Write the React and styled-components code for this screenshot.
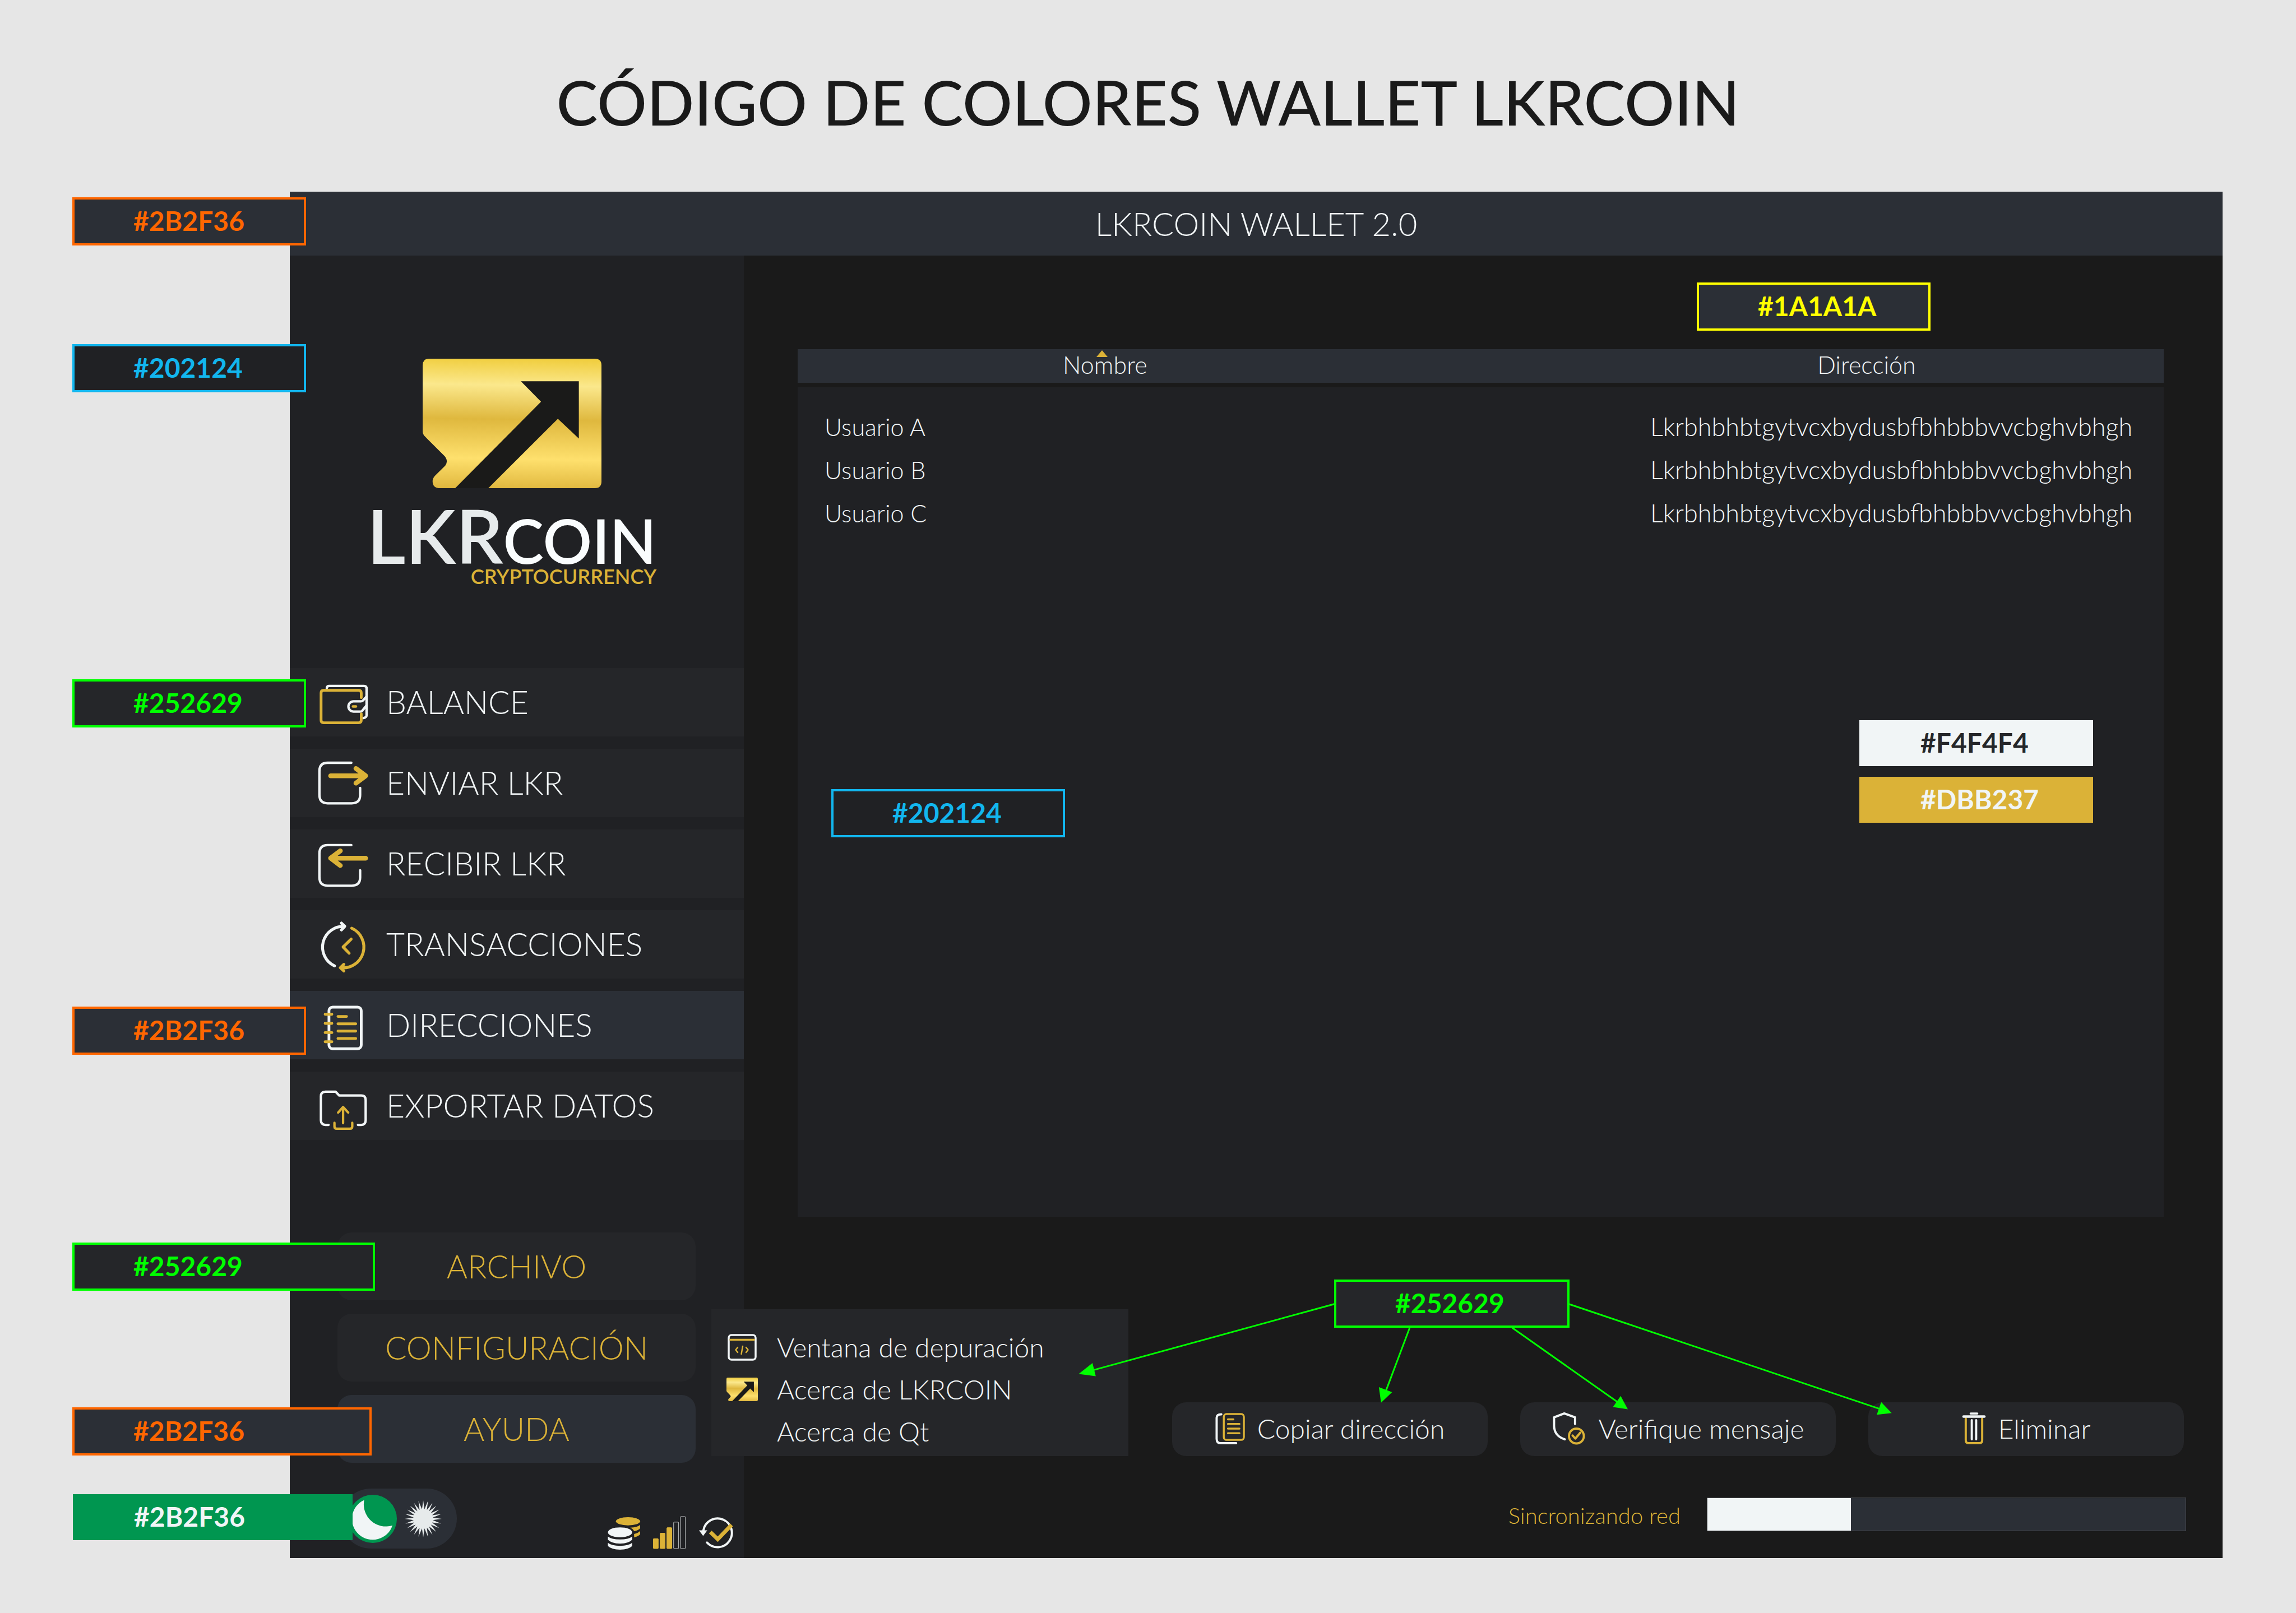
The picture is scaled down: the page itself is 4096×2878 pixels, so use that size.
import React, { useState } from "react";
import styled, { createGlobalStyle, css } from "styled-components";

const c = {
  page: "#e6e6e6",
  bar: "#2b2f36",
  side: "#202124",
  item: "#252629",
  main: "#1a1a1a",
  white: "#f1f5f6",
  gold: "#dbb237",
  green: "#00ff00",
  orange: "#ff6600",
  cyan: "#12b6ee",
  yellow: "#ffff00",
  emerald: "#009650",
};

const GlobalStyle = createGlobalStyle`
  * { box-sizing: border-box; }
  body {
    margin: 0;
    background: ${c.page};
    color: ${c.white};
    font-family: Lato, "Liberation Sans", sans-serif;
    font-weight: 300;
  }
  button { font: inherit; color: inherit; border: 0; cursor: pointer; }
`;

const Page = styled.div`
  display: flex;
  flex-direction: column;
  min-height: 100vh;
  padding-bottom: 98px;
`;

const PageTitle = styled.h1`
  margin: 0;
  padding: 117px 0 97px;
  color: #1a1a1a;
  font-size: 111px;
  font-weight: 500;
  line-height: 128px;
  text-align: center;
`;

const WalletWindow = styled.section`
  flex: 1;
  display: flex;
  flex-direction: column;
  margin: 0 131px 0 517px;
`;

const TitleBar = styled.header`
  position: relative;
  display: flex;
  align-items: center;
  justify-content: center;
  height: 114px;
  padding-bottom: 2px;
  background: ${c.bar};
  font-size: 58px;
`;

const Columns = styled.div`
  flex: 1;
  display: flex;
`;

const Sidebar = styled.aside`
  display: flex;
  flex-direction: column;
  width: 810px;
  background: ${c.side};
`;

const Brand = styled.div`
  position: relative;
  display: flex;
  flex-direction: column;
  align-items: center;
  height: 736px;
  padding: 184px 18px 0 0;
`;

const Wordmark = styled.div`
  display: flex;
  flex-direction: column;
  align-items: flex-end;
  margin-top: 34px;
`;

const WordmarkName = styled.div`
  color: #e7ebec;
  font-size: 133px;
  font-weight: 600;
  line-height: 100px;
`;

const WordmarkSmall = styled.span`
  color: #fafdfe;
  font-size: 109px;
`;

const WordmarkTag = styled.div`
  color: ${c.gold};
  font-size: 36px;
  font-weight: 600;
  line-height: 28px;
`;

const Nav = styled.nav`
  display: flex;
  flex-direction: column;
  gap: 22px;
`;

const Anchor = styled.div`
  position: relative;
`;

const NavButton = styled.button`
  display: flex;
  align-items: center;
  gap: 20px;
  width: 100%;
  height: 122px;
  padding: 0 0 0 44px;
  background: ${(p) => (p.$active ? c.bar : c.item)};
  font-size: 57px;
`;

const NavLabel = styled.span`
  padding-bottom: 2px;
`;

const MenuList = styled.div`
  display: flex;
  flex-direction: column;
  gap: 24px;
  margin: auto 86px 46px 85px;
`;

const MenuButton = styled.button`
  width: 100%;
  height: 121px;
  padding: 0 0 2px;
  border-radius: 25px;
  background: ${(p) => (p.$active ? c.bar : c.item)};
  color: ${c.gold};
  font-size: 57px;
`;

const Popup = styled.div`
  position: absolute;
  z-index: 2;
  left: 667px;
  top: -153px;
  width: 744px;
  padding: 30px 0 7px;
  background: ${c.item};
`;

const PopupItem = styled.button`
  display: grid;
  grid-template-columns: 56px 1fr;
  column-gap: 34px;
  align-items: center;
  justify-items: center;
  width: 100%;
  height: 75px;
  padding: 0 0 0 27px;
  background: none;
  font-size: 48px;
  text-align: left;
`;

const PopupLabel = styled.span`
  grid-column: 2;
  justify-self: start;
`;

const StatusRow = styled.div`
  display: flex;
  align-items: flex-end;
  justify-content: space-between;
  padding: 0 17px 17px 91px;
`;

const StatusIcons = styled.div`
  display: flex;
  gap: 20px;
  margin-bottom: -3px;
`;

const ThemeSwitch = styled.button`
  display: flex;
  align-items: center;
  gap: 14px;
  width: 207px;
  height: 107px;
  padding: 0 0 0 14px;
  border-radius: 54px;
  background: ${c.bar};
`;

const Main = styled.main`
  position: relative;
  flex: 1;
  display: flex;
  flex-direction: column;
  background: ${c.main};
`;

const Table = styled.table`
  flex: 1;
  display: flex;
  flex-direction: column;
  gap: 8px;
  margin: 167px 105px 0 96px;
  font-size: 43px;
`;

const Head = styled.thead`
  background: ${c.bar};
`;

const Body = styled.tbody`
  flex: 1;
  padding-top: 32px;
  background: ${c.side};
`;

const Row = styled.tr`
  display: grid;
  grid-template-columns: 45% 43.5%;
  justify-content: space-between;
`;

const HeadCell = styled.th`
  position: relative;
  padding: 0 0 4px;
  font-weight: 300;
  line-height: 56px;
  text-align: center;
`;

const SortMark = styled.svg`
  position: absolute;
  top: 2px;
  left: calc(50% - 15px);
`;

const Cell = styled.td`
  padding: 0 0 0 ${(p) => (p.$address ? 144 : 48)}px;
  font-size: ${(p) => (p.$address ? 45 : 43)}px;
  line-height: 77px;
`;

const Actions = styled.div`
  display: flex;
  justify-content: flex-end;
  gap: 58px;
  margin: 331px 69px 0 0;
`;

const ActionButton = styled.button`
  display: flex;
  align-items: center;
  justify-content: center;
  gap: 22px;
  width: 563px;
  height: 96px;
  padding: 0 0 4px;
  border-radius: 25px;
  background: ${c.item};
  font-size: 48px;
`;

const SyncRow = styled.div`
  display: flex;
  align-items: center;
  justify-content: flex-end;
  gap: 47px;
  margin: 74px 65px 48px 0;
`;

const SyncLabel = styled.label`
  padding-top: 4px;
  color: ${c.gold};
  font-size: 40px;
`;

const SyncBar = styled.progress`
  appearance: none;
  width: 855px;
  height: 60px;
  border: 1px solid #4b4d51;
  background: ${c.bar};
  &::-webkit-progress-bar { background: ${c.bar}; }
  &::-webkit-progress-value { background: ${c.white}; }
`;

const solid = css`
  padding-left: 107px;
  border-width: 2px;
`;

const tones = {
  orange: css`background: ${c.bar}; border-color: ${c.orange}; color: ${c.orange};`,
  cyan: css`background: ${c.side}; border-color: ${c.cyan}; color: ${c.cyan};`,
  green: css`background: ${c.item}; border-color: ${c.green}; color: ${c.green};`,
  yellow: css`background: ${c.bar}; border-color: ${c.yellow}; color: ${c.yellow};`,
  emerald: css`${solid} background: ${c.emerald}; border-color: ${c.emerald}; color: ${c.white};`,
  light: css`${solid} background: ${c.white}; border-color: ${c.white}; color: ${c.item};`,
  gold: css`${solid} background: ${c.gold}; border-color: ${c.gold}; color: ${c.white};`,
};

/* Colour tag pinned over the part of the window that it names. */
const Tag = styled.span`
  position: absolute;
  z-index: 3;
  top: ${(p) => p.$top};
  left: ${(p) => p.$left};
  right: ${(p) => p.$right};
  bottom: ${(p) => p.$bottom};
  width: ${(p) => p.$width || 417}px;
  padding: 0 0 2px 105px;
  border: 4px solid;
  font-size: 48px;
  font-weight: 700;
  line-height: 76px;
  ${(p) => tones[p.$tone]}
`;

const Arrows = styled.svg`
  position: absolute;
  z-index: 3;
  right: 572px;
  bottom: 242px;
  pointer-events: none;
`;

const stroke = { fill: "none", strokeLinecap: "round", strokeLinejoin: "round" };

function NavIcon({ top, children }) {
  return (
    <svg width="108" height="122" viewBox={`0 ${top} 330 372`} aria-hidden="true" {...stroke}>
      {children}
    </svg>
  );
}

const WalletIcon = () => (
  <NavIcon top={-69}>
    <g stroke={c.white} strokeWidth="13">
      <path d="M67 40Q68 28 80 28H270Q284 28 284 42V188Q284 199 268 203" />
      <path d="M284 85L265 107Q261 112 253 112H213a28 28 0 0 0 0 56H250Q256 168 260 164L284 134" />
    </g>
    <path d="M255 92V66Q255 52 241 52H50Q36 52 36 66V215Q36 229 50 229H241Q255 229 255 215V180" stroke={c.gold} strokeWidth="15" />
    <path d="M210 140H226" stroke={c.gold} strokeWidth="14" />
  </NavIcon>
);

const SendIcon = () => (
  <NavIcon top={371}>
    <path d="M201 447H72Q27 447 27 492V623Q27 668 72 668H203Q249 668 249 623V584" stroke={c.white} strokeWidth="13" />
    <path d="M88 518H278M226 478L279 518L226 558" stroke={c.gold} strokeWidth="26" />
  </NavIcon>
);

const ReceiveIcon = () => (
  <NavIcon top={810}>
    <path d="M201 895H72Q27 895 27 940V1071Q27 1116 72 1116H203Q249 1116 249 1071V1032" stroke={c.white} strokeWidth="13" />
    <path d="M279 966H90M141 926L88 966L141 1006" stroke={c.gold} strokeWidth="26" />
  </NavIcon>
);

const HistoryIcon = () => (
  <NavIcon top={-27}>
    <path d="M109 276A113 113 0 0 1 165 61M147 43L165 61L147 80" stroke={c.white} strokeWidth="16" />
    <path d="M203 71A113 113 0 0 1 142 286M160 268L141 286L160 304M200 130L156 173L189 207" stroke={c.gold} strokeWidth="16" />
  </NavIcon>
);

const NotebookIcon = () => (
  <NavIcon top={411}>
    <rect x="79" y="499" width="176" height="227" rx="20" stroke={c.white} strokeWidth="15" />
    <path d="M58 538h37M58 588h37M58 638h37M58 688h37M128 550h47M128 590h97M128 630h97M128 670h97" stroke={c.gold} strokeWidth="15" />
  </NavIcon>
);

const ExportIcon = () => (
  <NavIcon top={851}>
    <path d="M77 1141H60Q35 1141 35 1116V985Q35 960 60 960H115L135 981H255Q279 981 279 1005V1116Q279 1141 255 1141H237" stroke={c.white} strokeWidth="13" />
    <path d="M156 1132V1045M129 1074L156 1044L184 1074M109 1130V1150Q109 1162 121 1162H194Q206 1162 206 1150V1130" stroke={c.gold} strokeWidth="13" />
  </NavIcon>
);

function Logo({ id, width, height }) {
  return (
    <svg width={width} height={height} viewBox="0 0 324 235" preserveAspectRatio="none" aria-hidden="true">
      <defs>
        <linearGradient id={id} gradientUnits="userSpaceOnUse" x1="166" y1="-2" x2="162" y2="237">
          <stop offset="0" stopColor="#f0cd3c" />
          <stop offset=".21" stopColor="#fbe88c" />
          <stop offset=".47" stopColor="#dfb83e" />
          <stop offset=".77" stopColor="#fee06d" />
          <stop offset="1" stopColor="#e0b73e" />
        </linearGradient>
      </defs>
      <path fill={`url(#${id})`} d="M12 0H312Q324 0 324 12V223Q324 235 312 235H29Q18 234 18 222Q18 218 22 213L41 194Q47 186 40 177L4 141Q0 137 0 132V12Q0 0 12 0Z" />
      <path fill="#1a1a19" d="M178 41H283V145L245 109L119 235H59L214.500 78Z" />
    </svg>
  );
}

const DebugIcon = () => (
  <svg width="52" height="48" viewBox="0 0 52 48" aria-hidden="true" {...stroke} strokeWidth="3.500">
    <rect x="2" y="2" width="48" height="44" rx="5" stroke={c.white} />
    <path d="M5 10.500H47" stroke={c.gold} />
    <path d="M18 24L14.500 28.500L18 33M27 22L24.500 36M33 24L36.500 28.500L33 33" stroke={c.gold} strokeWidth="2.500" />
  </svg>
);

const CopyIcon = () => (
  <svg width="53" height="57" viewBox="9 12 54 58" aria-hidden="true" {...stroke}>
    <path d="M20 15.500Q11.500 15.500 11.500 22V60Q11.500 68 19 68H47" stroke={c.white} strokeWidth="4" />
    <rect x="24.500" y="15" width="36.500" height="47" rx="5" stroke={c.gold} strokeWidth="3.500" />
    <path d="M32 24.700h10M32 33h21M32 41.500h21M32 50h21" stroke={c.gold} strokeWidth="3.500" />
  </svg>
);

const ShieldIcon = () => (
  <svg width="61" height="61" viewBox="631 11 62 62" aria-hidden="true" {...stroke}>
    <path d="M672.500 34V22L653 15L634.500 22V38Q635 56 654 62" stroke={c.white} strokeWidth="4" />
    <circle cx="675" cy="56" r="13.500" stroke={c.gold} strokeWidth="4" />
    <path d="M668 55L673 60.500L682 50" stroke={c.gold} strokeWidth="4" />
  </svg>
);

const TrashIcon = () => (
  <svg width="43" height="59" viewBox="0 0 44 60" aria-hidden="true" {...stroke}>
    <path d="M7 12V52Q7 57 12 57H32Q37 57 37 52V12" stroke={c.gold} strokeWidth="4" />
    <path d="M3 8.500H41" stroke={c.white} strokeWidth="4.500" />
    <path d="M16 3H28M18 15V50M26 15V50" stroke={c.white} strokeWidth="4" />
  </svg>
);

const CoinsIcon = () => (
  <svg width="61" height="61" viewBox="543 91 62 62" aria-hidden="true">
    <g fill={c.gold}>
      <ellipse cx="581" cy="100.500" rx="22" ry="7.500" />
      <path d="M603 107V113Q600 117 592 118.500Q590 114 585 112Q598 111.500 603 107Z" />
      <path d="M603 118V124Q600 128 592 129.500V123.500Q600 122 603 118Z" />
    </g>
    <g fill={c.white}>
      <ellipse cx="566.500" cy="120.500" rx="22" ry="9" />
      <path d="M544.500 128Q551 133.500 566.500 133.500T588.500 128V134Q582 141 566.500 141T544.500 134Z" />
      <path d="M544.500 139.500Q551 145 566.500 145T588.500 139.500V145.500Q582 152 566.500 152T544.500 145.500Z" />
    </g>
  </svg>
);

const SignalIcon = () => (
  <svg width="61" height="61" viewBox="626 91 62 62" aria-hidden="true">
    {[0, 1, 2, 3, 4].map((i) => (
      <rect
        key={i}
        x={627.5 + i * 12.3}
        y={132 - i * 10}
        width="9"
        height={18 + i * 10}
        rx="1"
        fill={i < 3 ? c.gold : "none"}
        stroke={i < 3 ? c.gold : "#c9cccd"}
        strokeWidth="1"
      />
    ))}
  </svg>
);

const SyncedIcon = () => (
  <svg width="65" height="61" viewBox="706 91 66 62" aria-hidden="true">
    <path d="M716 117A26 26 0 1 1 722.500 139" fill="none" stroke={c.white} strokeWidth="4" strokeLinecap="round" />
    <path d="M708 117H723L715.500 127Z" fill={c.white} />
    <path d="M728.500 120L742 133L767 107" fill="none" stroke={c.gold} strokeWidth="7" />
  </svg>
);

const MoonIcon = () => (
  <svg width="86" height="86" viewBox="71.500 50.500 87 87" aria-hidden="true">
    <circle cx="115" cy="94" r="43.500" fill={c.emerald} />
    <path d="M99.500 60A37.500 37.500 0 1 0 150.500 106A40 40 0 0 1 99.500 60Z" fill={c.white} />
  </svg>
);

const sunPoints = Array.from({ length: 48 }, (_, i) => {
  const r = i % 2 ? 17 : 33;
  const a = (i * Math.PI) / 24 - Math.PI / 2;
  return `${(33 + r * Math.cos(a)).toFixed(1)},${(33 + r * Math.sin(a)).toFixed(1)}`;
}).join(" ");

const SunIcon = () => (
  <svg width="66" height="66" viewBox="0 0 66 66" aria-hidden="true">
    <polygon points={sunPoints} fill="#e6eaeb" />
  </svg>
);

const navItems = [
  { label: "BALANCE", Icon: WalletIcon, tag: { text: "#252629", tone: "green", top: "20px" } },
  { label: "ENVIAR LKR", Icon: SendIcon },
  { label: "RECIBIR LKR", Icon: ReceiveIcon },
  { label: "TRANSACCIONES", Icon: HistoryIcon },
  { label: "DIRECCIONES", Icon: NotebookIcon, tag: { text: "#2B2F36", tone: "orange", top: "28px" } },
  { label: "EXPORTAR DATOS", Icon: ExportIcon },
];

const rows = ["Usuario A", "Usuario B", "Usuario C"].map((name) => ({
  name,
  address: "Lkrbhbhbtgytvcxbydusbfbhbbbvvcbghvbhgh",
}));

export default function App() {
  const [active, setActive] = useState("DIRECCIONES");
  const [dark, setDark] = useState(true);

  return (
    <Page>
      <GlobalStyle />
      <PageTitle>CÓDIGO DE COLORES WALLET LKRCOIN</PageTitle>
      <WalletWindow>
        <TitleBar>
          LKRCOIN WALLET 2.0
          <Tag $tone="orange" $left="-388px" $top="10px">#2B2F36</Tag>
        </TitleBar>
        <Columns>
          <Sidebar>
            <Brand>
              <Tag $tone="cyan" $left="-388px" $top="158px">#202124</Tag>
              <Logo id="logoLarge" width="319" height="231" />
              <Wordmark>
                <WordmarkName>LKR<WordmarkSmall>COIN</WordmarkSmall></WordmarkName>
                <WordmarkTag>CRYPTOCURRENCY</WordmarkTag>
              </Wordmark>
            </Brand>
            <Nav>
              {navItems.map(({ label, Icon, tag }) => (
                <Anchor key={label}>
                  <NavButton type="button" $active={active === label} onClick={() => setActive(label)}>
                    <Icon />
                    <NavLabel>{label}</NavLabel>
                  </NavButton>
                  {tag && <Tag $tone={tag.tone} $left="-388px" $top={tag.top}>{tag.text}</Tag>}
                </Anchor>
              ))}
            </Nav>
            <MenuList>
              <Anchor>
                <MenuButton type="button">ARCHIVO</MenuButton>
                <Tag $tone="green" $left="-473px" $top="18px" $width={540}>#252629</Tag>
              </Anchor>
              <Anchor>
                <MenuButton type="button">CONFIGURACIÓN</MenuButton>
              </Anchor>
              <Anchor>
                <MenuButton type="button" $active>AYUDA</MenuButton>
                <Tag $tone="orange" $left="-473px" $top="22px" $width={534}>#2B2F36</Tag>
                <Popup>
                  <PopupItem type="button"><DebugIcon /><PopupLabel>Ventana de depuración</PopupLabel></PopupItem>
                  <PopupItem type="button"><Logo id="logoSmall" width="56" height="42" /><PopupLabel>Acerca de LKRCOIN</PopupLabel></PopupItem>
                  <PopupItem type="button"><PopupLabel>Acerca de Qt</PopupLabel></PopupItem>
                </Popup>
              </Anchor>
            </MenuList>
            <StatusRow>
              <Anchor>
                <ThemeSwitch type="button" role="switch" aria-checked={dark} aria-label="Modo oscuro" onClick={() => setDark(!dark)}>
                  <MoonIcon />
                  <SunIcon />
                </ThemeSwitch>
                <Tag $tone="emerald" $left="-478px" $top="10px" $width={499}>#2B2F36</Tag>
              </Anchor>
              <StatusIcons>
                <CoinsIcon />
                <SignalIcon />
                <SyncedIcon />
              </StatusIcons>
            </StatusRow>
          </Sidebar>
          <Main>
            <Table>
              <Head>
                <Row>
                  <HeadCell scope="col">
                    <SortMark width="20" height="12" viewBox="0 0 20 12" aria-hidden="true">
                      <path d="M10 0L20 12H0Z" fill={c.gold} />
                    </SortMark>
                    Nombre
                  </HeadCell>
                  <HeadCell scope="col">Dirección</HeadCell>
                </Row>
              </Head>
              <Body>
                {rows.map((r) => (
                  <Row key={r.name}>
                    <Cell>{r.name}</Cell>
                    <Cell $address>{r.address}</Cell>
                  </Row>
                ))}
              </Body>
            </Table>
            <Actions>
              <ActionButton type="button"><CopyIcon />Copiar dirección</ActionButton>
              <ActionButton type="button"><ShieldIcon />Verifique mensaje</ActionButton>
              <ActionButton type="button"><TrashIcon />Eliminar</ActionButton>
            </Actions>
            <SyncRow>
              <SyncLabel htmlFor="sync">Sincronizando red</SyncLabel>
              <SyncBar id="sync" value="30" max="100" />
            </SyncRow>
            <Tag $tone="yellow" $right="521px" $top="48px">#1A1A1A</Tag>
            <Tag $tone="cyan" $left="156px" $top="952px">#202124</Tag>
            <Tag $tone="light" $right="231px" $top="829px">#F4F4F4</Tag>
            <Tag $tone="gold" $right="231px" $top="930px">#DBB237</Tag>
            <Tag $tone="green" $right="1165px" $bottom="411px" $width={420}>#252629</Tag>
            <Arrows width="1485" height="226" viewBox="1940 2350 1510 230" aria-hidden="true">
              <g stroke={c.green} strokeWidth="3">
                <path d="M2420 2365L1975 2487M2557 2408L2511 2530M2743 2408L2940 2547M2846 2365L3415 2557" />
              </g>
              <g fill={c.green}>
                <path d="M1956 2492L1981 2472L1987 2496Z" />
                <path d="M2505 2544L2501 2516L2525 2525Z" />
                <path d="M2953 2556L2926 2552L2940 2532Z" />
                <path d="M3432 2563L3405 2566L3413 2543Z" />
              </g>
            </Arrows>
          </Main>
        </Columns>
      </WalletWindow>
    </Page>
  );
}
